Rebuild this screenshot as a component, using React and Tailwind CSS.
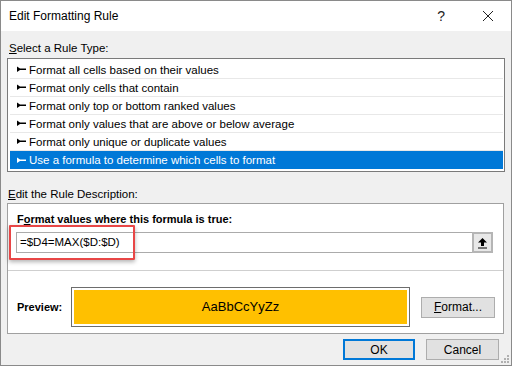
import React from 'react';

const rules = [
  'Format all cells based on their values',
  'Format only cells that contain',
  'Format only top or bottom ranked values',
  'Format only values that are above or below average',
  'Format only unique or duplicate values',
  'Use a formula to determine which cells to format',
];

const Pointer = ({ color }) => (
  <svg width="9" height="7" viewBox="0 0 9 7" className="shrink-0">
    <path d="M0 0.5 L3 2.5 L9 2.5 L9 4 L3 4 L0 6 Z" fill={color} />
  </svg>
);

const Btn = ({ children, primary, className = '' }) => (
  <div
    className={
      'flex items-center justify-center bg-[#e1e1e1] text-[12px] text-black ' +
      (primary ? 'border-2 border-[#0078d7] ' : 'border border-[#adadad] ') +
      className
    }
  >
    {children}
  </div>
);

export default function App() {
  const selected = 5;

  return (
    <div
      className="relative w-[512px] h-[366px] flex flex-col bg-[#f0f0f0] border border-[#8a8a8a] overflow-hidden"
      style={{ fontFamily: '"Liberation Sans", Arial, sans-serif' }}
    >
      {/* title bar */}
      <div className="h-[30px] bg-white flex items-center shrink-0">
        <span className="pl-[8px] text-[12px] text-black">Edit Formatting Rule</span>
        <span className="ml-auto mr-[37px] text-[14px] text-[#222]">?</span>
        <svg width="12" height="12" viewBox="0 0 12 12" className="mr-[17px]">
          <path d="M1 1 L11 11 M11 1 L1 11" stroke="#222" strokeWidth="1" />
        </svg>
      </div>

      <div className="flex flex-col px-[6px] text-[11.5px] text-black">
        <div className="pt-[9px] pl-[2px] leading-[16px]">
          <span className="underline">S</span>elect a Rule Type:
        </div>

        {/* rule list */}
        <div className="mt-[2px] border border-[#7a7a7a] bg-white p-[2px] pr-[1px]">
          {rules.map((r, i) => (
            <div
              key={r}
              className={
                'h-[18px] flex items-center gap-[3px] pl-[7px] leading-[16px] ' +
                (i === selected
                  ? 'bg-[#0078d7] text-white'
                  : 'border-b border-[#e8e8e8]')
              }
            >
              <Pointer color={i === selected ? '#fff' : '#000'} />
              <span>{r}</span>
            </div>
          ))}
        </div>

        <div className="mt-[14px] pl-[1px] leading-[16px]">
          <span className="underline">E</span>dit the Rule Description:
        </div>

        {/* description panel */}
        <div className="relative mt-[1px] mr-[1px] border border-[#a0a0a0] bg-white flex flex-col pb-[6px]">
          <div className="pt-[7px] pl-[9px] font-bold text-[11px] leading-[16px]">
            F<span className="underline">o</span>rmat values where this formula is true:
          </div>
          <div className="mt-[5px] ml-[8px] mr-[10px] h-[21px] flex border border-[#ababab]">
            <div className="flex-1 flex items-center pl-[3px]">=$D4=MAX($D:$D)</div>
            <div className="w-[21px] -my-[1px] -mr-[1px] border-2 border-[#b5b5b5] bg-[#e8e8e8] flex items-center justify-center">
              <svg width="11" height="12" viewBox="0 0 11 12">
                <path d="M5.5 1 L10 5.5 L7 5.5 L7 9 L4 9 L4 5.5 L1 5.5 Z" fill="#000" />
                <path d="M1 11 L10 11" stroke="#000" strokeWidth="1" />
              </svg>
            </div>
          </div>

          {/* red highlight around formula */}
          <div className="absolute left-[1px] top-[21px] w-[126px] h-[35px] border-2 border-[#e84646] rounded-[1px] shadow-[0_2px_4px_rgba(0,0,0,0.3)]" />

          <div className="mt-[17px] h-px bg-[#cfcfcf]" />

          <div className="mt-[16px] flex items-center">
            <div className="w-[63px] pl-[9px] font-bold text-[11px]">Preview:</div>
            <div className="w-[339px] h-[40px] border border-[#6d6d6d] p-[2px]">
              <div className="w-full h-full bg-[#ffc000] flex items-center justify-center text-[13px]">
                AaBbCcYyZz
              </div>
            </div>
            <Btn className="ml-[11px] w-[74px] h-[21px]">
              <span className="underline">F</span>ormat...
            </Btn>
          </div>
        </div>

        {/* dialog buttons */}
        <div className="mt-[5px] flex justify-end gap-[11px] mr-[6px]">
          <Btn primary className="w-[72px] h-[21px]">OK</Btn>
          <Btn className="w-[73px] h-[21px]">Cancel</Btn>
        </div>
      </div>

      {/* resize grip */}
      <svg width="10" height="10" viewBox="0 0 10 10" className="absolute right-[1px] bottom-[1px]">
        <rect x="7" y="1" width="2" height="2" fill="#b0b0b0" />
        <rect x="4" y="4" width="2" height="2" fill="#b0b0b0" />
        <rect x="7" y="4" width="2" height="2" fill="#b0b0b0" />
        <rect x="1" y="7" width="2" height="2" fill="#b0b0b0" />
        <rect x="4" y="7" width="2" height="2" fill="#b0b0b0" />
        <rect x="7" y="7" width="2" height="2" fill="#b0b0b0" />
      </svg>
    </div>
  );
}
